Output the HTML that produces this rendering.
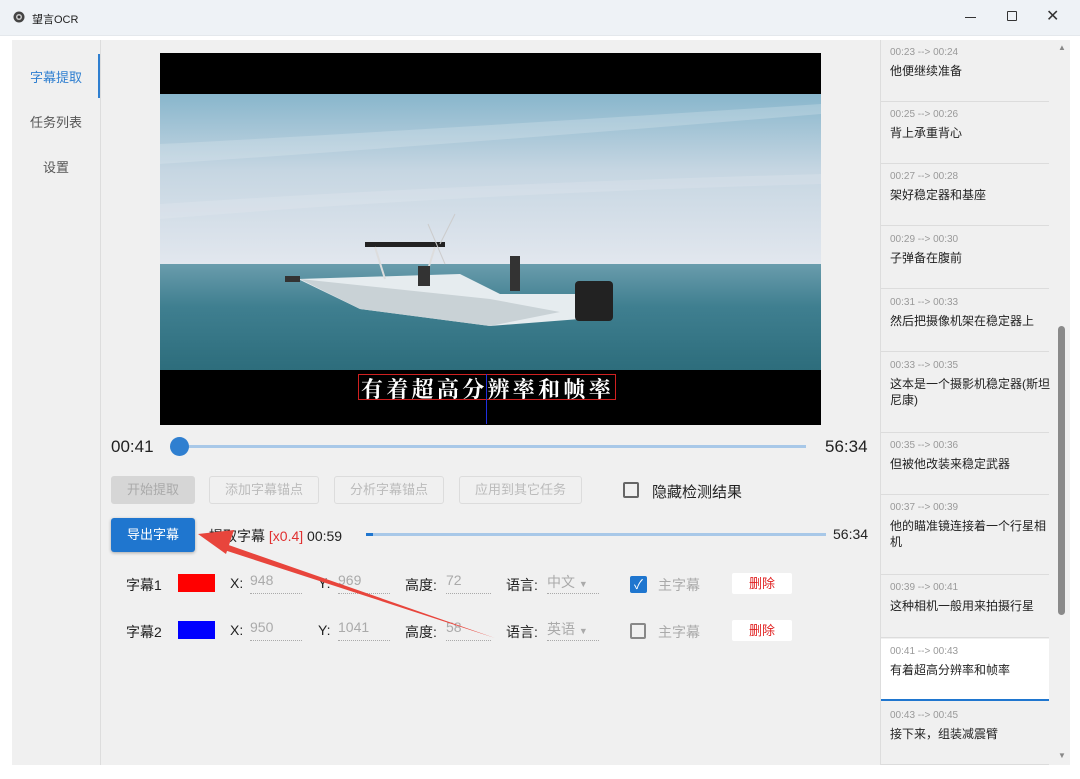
<!DOCTYPE html>
<html><head><meta charset="utf-8"><style>
*{box-sizing:border-box;margin:0;padding:0}
body{width:1080px;height:779px;background:#fff;font-family:"Liberation Sans","Noto Sans CJK SC",sans-serif;position:relative;overflow:hidden;color:#222}
.a{position:absolute}
.title{left:0;top:0;width:1080px;height:36px;background:#eef2f6;border-bottom:1px solid #e4e8ec}
.panel{left:12px;top:40px;width:1058px;height:725px;background:#f0f0f0}
.nav{font-size:13px;color:#555;width:88px;text-align:center}
.btn{height:28px;border:1px solid #dcdcdc;border-radius:3px;font-size:13px;color:#bbb;text-align:center;line-height:26px}
.lbl{font-size:14px;color:#222}
.val{font-size:14px;color:#aaa;border-bottom:1px dotted #aaa;height:22px}
.item{left:881px;width:168px;height:62px;border-bottom:1px solid #dcdcdc}
.item .t{position:absolute;left:9px;top:7px;font-size:10px;color:#999}
.item .s{position:absolute;left:9px;top:23px;font-size:12px;color:#222;line-height:16px;width:160px}
.chk{width:16px;height:16px;border:2px solid #666;border-radius:2px}
.del{width:60px;height:21px;background:#fff;color:#e02020;font-size:13px;text-align:center;line-height:21px;border-radius:2px}
</style></head><body>
<div class="a title"></div>
<svg class="a" style="left:12px;top:10px" width="14" height="14" viewBox="0 0 14 14"><circle cx="7" cy="7" r="5.5" fill="#444"/><circle cx="7" cy="7" r="3" fill="#ccc"/><circle cx="7" cy="7" r="1.5" fill="#333"/></svg>
<div class="a" style="left:32px;top:11px;font-size:11px;color:#222">望言OCR</div>
<div class="a" style="left:965px;top:17px;width:11px;height:1px;background:#333"></div>
<div class="a" style="left:1007px;top:11px;width:10px;height:10px;border:1px solid #333;border-radius:1px"></div>
<div class="a" style="left:1046px;top:6px;font-size:16px;color:#333">✕</div>
<div class="a panel"></div>
<div class="a" style="left:100px;top:40px;width:1px;height:725px;background:#ddd"></div>
<div class="a nav" style="left:12px;top:67px;color:#2f7fd0">字幕提取</div>
<div class="a" style="left:98px;top:54px;width:2px;height:44px;background:#2f7fd0"></div>
<div class="a nav" style="left:12px;top:112px">任务列表</div>
<div class="a nav" style="left:12px;top:157px">设置</div>

<!-- video -->
<div class="a" style="left:160px;top:53px;width:661px;height:372px;background:#000"></div>
<svg class="a" style="left:160px;top:94px" width="661" height="276" viewBox="0 0 661 276">
<defs><linearGradient id="sky" x1="0" y1="0" x2="0" y2="1"><stop offset="0" stop-color="#88b6cc"/><stop offset="0.45" stop-color="#c6d6e2"/><stop offset="1" stop-color="#e2e7ee"/></linearGradient>
<linearGradient id="sea" x1="0" y1="0" x2="0" y2="1"><stop offset="0" stop-color="#6a9cac"/><stop offset="0.4" stop-color="#3f7f90"/><stop offset="1" stop-color="#2d6d7c"/></linearGradient></defs>
<rect width="661" height="170" fill="url(#sky)"/>
<path d="M0 50 Q200 40 661 10 L661 20 Q300 50 0 70Z" fill="#e8eef4" opacity=".25"/>
<path d="M0 110 Q300 90 661 80 L661 90 Q300 100 0 125Z" fill="#eef2f6" opacity=".2"/>
<rect y="170" width="661" height="106" fill="url(#sea)"/>
<path d="M138 185 L300 180 L340 200 L420 200 L420 225 L330 232 L200 215 Z" fill="#e6ecef"/>
<path d="M140 185 L330 205 L400 218 L330 232 L200 215Z" fill="#c9d2d6"/>
<rect x="205" y="148" width="80" height="5" fill="#222"/>
<path d="M215 153 L225 185 M275 153 L265 185" stroke="#ddd" stroke-width="2"/>
<path d="M268 130 L285 170 M295 120 L280 150" stroke="#ccc" stroke-width="1"/>
<rect x="415" y="187" width="38" height="40" rx="4" fill="#222"/>
<rect x="350" y="162" width="10" height="35" fill="#333"/>
<rect x="258" y="172" width="12" height="20" fill="#333"/>
<rect x="125" y="182" width="15" height="6" fill="#333"/>
</svg>
<div class="a" style="left:358px;top:374px;width:258px;height:26px;border:1px solid #d02020"></div>
<div class="a" style="left:486px;top:374px;width:1px;height:50px;background:#2030e0"></div>
<div class="a" style="left:361px;top:373px;font-family:'Noto Serif CJK SC',serif;font-size:22px;font-weight:bold;color:#fff;letter-spacing:3.3px;white-space:nowrap">有着超高分辨率和帧率</div>

<!-- timeline -->
<div class="a" style="left:111px;top:437px;font-size:17px;color:#222">00:41</div>
<div class="a" style="left:180px;top:445px;width:626px;height:3px;background:#a8c8e8"></div>
<div class="a" style="left:170px;top:437px;width:19px;height:19px;border-radius:50%;background:#2f7fd0"></div>
<div class="a" style="left:825px;top:437px;font-size:17px;color:#222">56:34</div>

<div class="a btn" style="left:111px;top:476px;width:84px;background:#d6d6d6;border-color:#d6d6d6;color:#aaa">开始提取</div>
<div class="a btn" style="left:209px;top:476px;width:110px">添加字幕锚点</div>
<div class="a btn" style="left:334px;top:476px;width:110px">分析字幕锚点</div>
<div class="a btn" style="left:459px;top:476px;width:123px">应用到其它任务</div>
<div class="a chk" style="left:623px;top:482px"></div>
<div class="a" style="left:652px;top:481px;font-size:15px;color:#222">隐藏检测结果</div>

<div class="a" style="left:111px;top:518px;width:84px;height:34px;background:#1f76cf;border-radius:3px;color:#fff;font-size:13px;text-align:center;line-height:34px;box-shadow:0 1px 3px rgba(0,0,0,.3)">导出字幕</div>
<div class="a" style="left:209px;top:526px;font-size:14px;color:#222">提取字幕 <span style="color:#e03030">[x0.4]</span> 00:59</div>
<div class="a" style="left:366px;top:533px;width:460px;height:3px;background:#a8c8e8"></div>
<div class="a" style="left:366px;top:533px;width:7px;height:3px;background:#1f76cf"></div>
<div class="a" style="left:833px;top:526px;font-size:14px;color:#222">56:34</div>

<div class="a lbl" style="left:126px;top:575px">字幕1</div>
<div class="a" style="left:178px;top:574px;width:37px;height:18px;background:#f00"></div>
<div class="a lbl" style="left:230px;top:575px">X:</div>
<div class="a val" style="left:250px;top:572px;width:52px">948</div>
<div class="a lbl" style="left:318px;top:575px">Y:</div>
<div class="a val" style="left:338px;top:572px;width:52px">969</div>
<div class="a lbl" style="left:405px;top:575px">高度:</div>
<div class="a val" style="left:446px;top:572px;width:45px">72</div>
<div class="a lbl" style="left:506px;top:575px">语言:</div>
<div class="a val" style="left:547px;top:572px;width:52px">中文 <span style="font-size:9px">▼</span></div>
<div class="a" style="left:630px;top:576px;width:17px;height:17px;background:#1f76cf;border-radius:2px;color:#fff;font-size:13px;text-align:center;line-height:17px">✓</div>
<div class="a" style="left:658px;top:575px;font-size:14px;color:#aaa">主字幕</div>
<div class="a del" style="left:732px;top:573px">删除</div>

<div class="a lbl" style="left:126px;top:622px">字幕2</div>
<div class="a" style="left:178px;top:621px;width:37px;height:18px;background:#00f"></div>
<div class="a lbl" style="left:230px;top:622px">X:</div>
<div class="a val" style="left:250px;top:619px;width:52px">950</div>
<div class="a lbl" style="left:318px;top:622px">Y:</div>
<div class="a val" style="left:338px;top:619px;width:52px">1041</div>
<div class="a lbl" style="left:405px;top:622px">高度:</div>
<div class="a val" style="left:446px;top:619px;width:45px">58</div>
<div class="a lbl" style="left:506px;top:622px">语言:</div>
<div class="a val" style="left:547px;top:619px;width:52px">英语 <span style="font-size:9px">▼</span></div>
<div class="a chk" style="left:630px;top:623px;border-color:#888"></div>
<div class="a" style="left:658px;top:622px;font-size:14px;color:#aaa">主字幕</div>
<div class="a del" style="left:732px;top:620px">删除</div>

<!-- arrow -->
<svg class="a" style="left:190px;top:520px" width="320" height="125" viewBox="0 0 320 125">
<path d="M305 118 L30 22 L28 28 Z" fill="#e8453c"/>
<path d="M8 14 L44 10 L36 34 Z" fill="#e8453c"/>
</svg>

<!-- right list -->
<div class="a" style="left:880px;top:40px;width:1px;height:725px;background:#ddd"></div>
<div class="a item" style="top:40px"><div class="t">00:23 --&gt; 00:24</div><div class="s">他便继续准备</div></div>
<div class="a item" style="top:102px"><div class="t">00:25 --&gt; 00:26</div><div class="s">背上承重背心</div></div>
<div class="a item" style="top:164px"><div class="t">00:27 --&gt; 00:28</div><div class="s">架好稳定器和基座</div></div>
<div class="a item" style="top:227px"><div class="t">00:29 --&gt; 00:30</div><div class="s">子弹备在腹前</div></div>
<div class="a item" style="top:290px"><div class="t">00:31 --&gt; 00:33</div><div class="s">然后把摄像机架在稳定器上</div></div>
<div class="a item" style="top:353px;height:80px"><div class="t">00:33 --&gt; 00:35</div><div class="s">这本是一个摄影机稳定器(斯坦尼康)</div></div>
<div class="a item" style="top:433px"><div class="t">00:35 --&gt; 00:36</div><div class="s">但被他改装来稳定武器</div></div>
<div class="a item" style="top:495px;height:80px"><div class="t">00:37 --&gt; 00:39</div><div class="s">他的瞄准镜连接着一个行星相机</div></div>
<div class="a item" style="top:575px;height:63px"><div class="t">00:39 --&gt; 00:41</div><div class="s">这种相机一般用来拍摄行星</div></div>
<div class="a item" style="top:639px;background:#fff;border-bottom:2px solid #1f76cf"><div class="t">00:41 --&gt; 00:43</div><div class="s">有着超高分辨率和帧率</div></div>
<div class="a item" style="top:703px"><div class="t">00:43 --&gt; 00:45</div><div class="s">接下来，组装减震臂</div></div>
<div class="a" style="left:1058px;top:43px;font-size:8px;color:#888">▲</div>
<div class="a" style="left:1058px;top:751px;font-size:8px;color:#888">▼</div>
<div class="a" style="left:1058px;top:326px;width:7px;height:289px;background:#8a8a8a;border-radius:4px"></div>
</body></html>
